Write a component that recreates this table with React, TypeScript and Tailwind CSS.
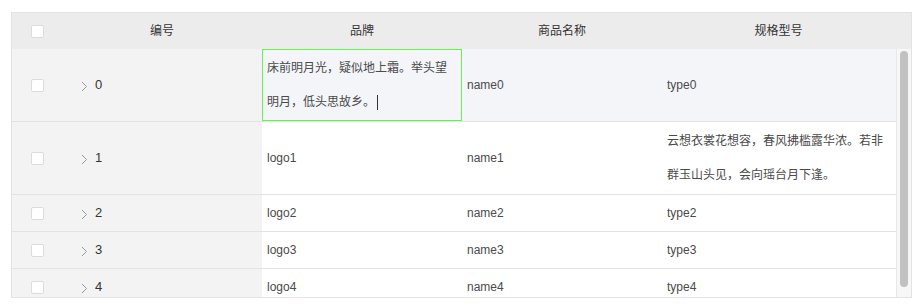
import React from 'react';

const rows = [
    { id: 0, brand: '床前明月光，疑似地上霜。举头望明月，低头思故乡。', name: 'name0', type: 'type0', tall: true, editing: true, hover: true },
    { id: 1, brand: 'logo1', name: 'name1', type: '云想衣裳花想容，春风拂槛露华浓。若非群玉山头见，会向瑶台月下逢。', tall: true },
    { id: 2, brand: 'logo2', name: 'name2', type: 'type2' },
    { id: 3, brand: 'logo3', name: 'name3', type: 'type3' },
    { id: 4, brand: 'logo4', name: 'name4', type: 'type4' },
];

const Checkbox = () => <span className="block w-[13px] h-[13px] bg-white border border-[#dcdcdc] rounded-[2px]" />;

const Chevron = () => (
    <svg width="7" height="11" viewBox="0 0 7 11" className="mr-[7px] mt-[3px]">
        <path d="M1 1 L5.5 5.5 L1 10" fill="none" stroke="#999" strokeWidth="1" />
    </svg>
);

export default function App() {
    return (
        <div className="pt-[12px] pl-[11px] bg-white min-h-[308px]" style={{ fontFamily: '"Liberation Sans", "Noto Sans CJK SC", sans-serif' }}>
            <div className="w-[901px] border border-[#e3e3e3] text-[12px]">
                <div className="grid grid-cols-[50px_200px_200px_200px_1fr] h-[36px] bg-[#ececec] text-[#333] items-center">
                    <div className="flex justify-center"><Checkbox /></div>
                    <div className="text-center">编号</div>
                    <div className="text-center">品牌</div>
                    <div className="text-center">商品名称</div>
                    <div className="text-center pr-[16px]">规格型号</div>
                </div>
                <div className="flex h-[248px] overflow-hidden">
                    <div className="flex-1">
                        {rows.map(r => (
                            <div key={r.id} className={`grid grid-cols-[50px_200px_200px_200px_1fr] border-b border-[#e3e3e3] text-[#4a4a4a] ${r.tall ? 'h-[73px]' : 'h-[37px]'} ${r.hover ? 'bg-[#f4f5f9]' : 'bg-white'}`}>
                                <div className="flex items-center justify-center bg-[#f3f3f3]"><Checkbox /></div>
                                <div className="flex items-center pl-[19px] bg-[#f3f3f3] text-[#333] text-[13px]"><Chevron />{r.id}</div>
                                <div className={`flex items-center ${r.editing ? 'border border-[#66f255] pl-[4px] pr-[8px]' : 'pl-[5px]'}`}>
                                    {r.editing ? (
                                        <span className="leading-[34px]">{r.brand}<span className="inline-block w-px h-[15px] bg-[#333] align-middle ml-[2px]" /></span>
                                    ) : r.brand}
                                </div>
                                <div className="flex items-center pl-[5px]">{r.name}</div>
                                <div className="flex items-center pl-[5px] pr-[10px]"><span className="leading-[34px]">{r.type}</span></div>
                            </div>
                        ))}
                    </div>
                    <div className="w-[15px] bg-[#f7f7f7] border-l border-[#e8e8e8] pt-[2px] px-[3px]">
                        <div className="h-[236px] bg-[#c1c1c1] rounded-full" />
                    </div>
                </div>
            </div>
        </div>
    );
}
